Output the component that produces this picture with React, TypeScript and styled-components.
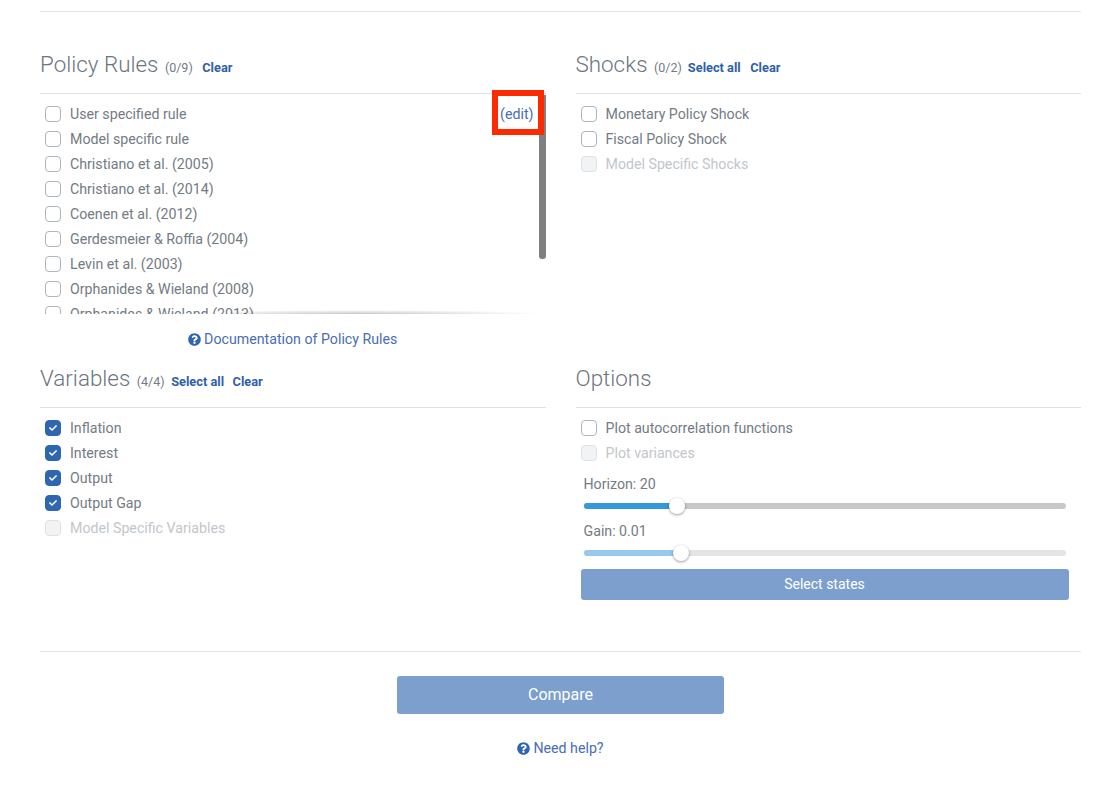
import React, { FunctionComponent } from "react";
import styled, { createGlobalStyle } from "styled-components";
import { FaCheck, FaQuestionCircle } from "react-icons/fa";

const GlobalStyle = createGlobalStyle`
  html, body {
    margin: 0;
    padding: 0;
    background: #fff;
  }
  body {
    font-family: Roboto, "Liberation Sans", sans-serif;
    font-size: 14.2px;
    color: #737b83;
  }
`;

const Page = styled.div`
  width: 1041px;
  padding: 11px 37px 0 40px;
  height: 779px;
  overflow: hidden;
`;

const Rule = styled.hr`
  margin: 0;
  border: 0;
  border-top: 1px solid #e4e4e4;
`;

const Grid = styled.div`
  display: grid;
  grid-template-columns: 505.5px 505.5px;
  column-gap: 30px;
  grid-template-rows: 314px 293px;
  margin-top: 32px;
`;

const Section = styled.section`
  display: flex;
  flex-direction: column;
  min-width: 0;
`;

const SectionHeader = styled.header`
  display: flex;
  align-items: baseline;
  height: 50px;
  box-sizing: border-box;
  padding-top: 6px;
  border-bottom: 1px solid #e0e0e0;
`;

const Title = styled.h2`
  margin: 0;
  font-size: 22.4px;
  line-height: 28px;
  font-weight: 300;
  color: #6c757d;
`;

const Count = styled.span`
  margin-left: 6.5px;
  font-size: 12.5px;
  color: #737b83;
`;

const HeaderLink = styled.a<{ $gap?: number }>`
  margin-left: ${({ $gap }) => $gap ?? 9.5}px;
  font-size: 12.8px;
  font-weight: 700;
  color: #2f5fa8;
  text-decoration: none;
`;

const ScrollBox = styled.div`
  position: relative;
  height: 219px;
  box-sizing: border-box;
  margin-top: 1px;
  padding-top: 6px;
  overflow: hidden;
`;

const List = styled.div<{ $top?: number }>`
  display: flex;
  flex-direction: column;
  padding-top: ${({ $top }) => $top ?? 0}px;
`;

const Row = styled.label<{ $disabled?: boolean }>`
  display: flex;
  align-items: center;
  height: 25px;
  padding-left: 5px;
  font-size: 14.2px;
  color: ${({ $disabled }) => ($disabled ? "#c2c6cb" : "#737b83")};
`;

const Box = styled.span<{ $checked?: boolean; $disabled?: boolean }>`
  display: flex;
  align-items: center;
  justify-content: center;
  flex: none;
  align-self: flex-start;
  width: 16px;
  height: 16px;
  margin: 5px 9px 0 0;
  box-sizing: border-box;
  border-radius: 4px;
  border: 1px solid
    ${({ $checked, $disabled }) =>
      $checked ? "#2f66b0" : $disabled ? "#dfe2e5" : "#adb5bd"};
  background: ${({ $checked, $disabled }) =>
    $checked ? "#2f66b0" : $disabled ? "#f1f3f5" : "#fff"};
  color: #fff;
  font-size: 8px;
`;

const EditLink = styled.a`
  margin-left: auto;
  margin-right: 12px;
  color: #4a6db3;
  text-decoration: none;
`;

const ScrollThumb = styled.div`
  position: absolute;
  top: 0;
  right: 0;
  width: 7px;
  height: 164px;
  background: #808080;
  border-radius: 0 0 3px 3px;
`;

const BottomFade = styled.div`
  position: absolute;
  left: 190px;
  right: 0;
  bottom: 0;
  height: 4px;
  background: radial-gradient(ellipse at 40% 100%, rgba(0, 0, 0, 0.22), rgba(0, 0, 0, 0) 70%);
`;

const Highlight = styled.div`
  position: absolute;
  top: 90px;
  left: 492px;
  width: 52px;
  height: 45px;
  box-sizing: border-box;
  border: 6px solid #fc2a00;
`;

const HelpLink = styled.a`
  display: flex;
  align-items: center;
  justify-content: center;
  gap: 3px;
  color: #4a6db3;
  font-size: 14.2px;
  text-decoration: none;

  svg {
    color: #2f66b0;
    font-size: 13px;
  }
`;

const DocRow = styled.div`
  padding-top: 17px;
`;

const SliderBlock = styled.div<{ $muted?: boolean }>`
  padding: 0 15px 0 8px;
  margin-top: ${({ $muted }) => ($muted ? 14 : 11)}px;
`;

const SliderLabel = styled.div`
  font-size: 14.2px;
  line-height: 17px;
  color: #737b83;
`;

const Track = styled.div<{ $muted?: boolean }>`
  position: relative;
  height: 6px;
  margin-top: 10px;
  border-radius: 3px;
  background: ${({ $muted }) => ($muted ? "#e4e4e4" : "#c8c8c8")};
`;

const Fill = styled.div<{ $muted?: boolean }>`
  height: 100%;
  border-radius: 3px 0 0 3px;
  background: ${({ $muted }) => ($muted ? "#98c9ec" : "#3498db")};
`;

const Thumb = styled.div`
  position: absolute;
  top: -5px;
  width: 16px;
  height: 16px;
  margin-left: -8px;
  border-radius: 50%;
  background: #fff;
  box-shadow: 0 1px 3px rgba(0, 0, 0, 0.4);
`;

const Button = styled.button<{ $large?: boolean }>`
  display: block;
  box-sizing: border-box;
  border: 0;
  border-radius: 3px;
  background: #7c9fcd;
  color: #fff;
  font-family: inherit;
  font-weight: 400;
  padding: 0 0 2px;
  width: ${({ $large }) => ($large ? "327px" : "488px")};
  height: ${({ $large }) => ($large ? "38px" : "31px")};
  font-size: ${({ $large }) => ($large ? "16px" : "14px")};
`;

const SelectStates = styled.div`
  margin-top: 13px;
  padding-left: 5px;
`;

const Footer = styled.footer`
  display: flex;
  flex-direction: column;
  align-items: center;
  padding-top: 24px;
  gap: 26px;
`;

type CheckItem = { label: string; checked?: boolean; disabled?: boolean };

const policyRules: CheckItem[] = [
  { label: "User specified rule" },
  { label: "Model specific rule" },
  { label: "Christiano et al. (2005)" },
  { label: "Christiano et al. (2014)" },
  { label: "Coenen et al. (2012)" },
  { label: "Gerdesmeier & Roffia (2004)" },
  { label: "Levin et al. (2003)" },
  { label: "Orphanides & Wieland (2008)" },
  { label: "Orphanides & Wieland (2013)" },
];

const shocks: CheckItem[] = [
  { label: "Monetary Policy Shock" },
  { label: "Fiscal Policy Shock" },
  { label: "Model Specific Shocks", disabled: true },
];

const variables: CheckItem[] = [
  { label: "Inflation", checked: true },
  { label: "Interest", checked: true },
  { label: "Output", checked: true },
  { label: "Output Gap", checked: true },
  { label: "Model Specific Variables", disabled: true },
];

const options: CheckItem[] = [
  { label: "Plot autocorrelation functions" },
  { label: "Plot variances", disabled: true },
];

const CheckRow: FunctionComponent<{ item: CheckItem; children?: React.ReactNode }> = ({
  item,
  children,
}) => (
  <Row $disabled={item.disabled}>
    <Box $checked={item.checked} $disabled={item.disabled}>
      {item.checked && <FaCheck />}
    </Box>
    {item.label}
    {children}
  </Row>
);

const Slider: FunctionComponent<{ label: string; percent: number; muted?: boolean }> = ({
  label,
  percent,
  muted,
}) => (
  <SliderBlock $muted={muted}>
    <SliderLabel>{label}</SliderLabel>
    <Track $muted={muted}>
      <Fill $muted={muted} style={{ width: `${percent}%` }} />
      <Thumb style={{ left: `${percent}%` }} />
    </Track>
  </SliderBlock>
);

const App: FunctionComponent = () => {
  return (
    <Page>
      <GlobalStyle />
      <Rule />
      <Grid>
        <Section>
          <SectionHeader>
            <Title>Policy Rules</Title>
            <Count>(0/9)</Count>
            <HeaderLink>Clear</HeaderLink>
          </SectionHeader>
          <ScrollBox>
            <List>
              {policyRules.map((item, index) => (
                <CheckRow key={item.label} item={item}>
                  {index === 0 && <EditLink>(edit)</EditLink>}
                </CheckRow>
              ))}
            </List>
            <ScrollThumb />
            <BottomFade />
          </ScrollBox>
          <DocRow>
            <HelpLink>
              <FaQuestionCircle />
              Documentation of Policy Rules
            </HelpLink>
          </DocRow>
        </Section>

        <Section>
          <SectionHeader>
            <Title>Shocks</Title>
            <Count>(0/2)</Count>
            <HeaderLink $gap={6}>Select all</HeaderLink>
            <HeaderLink>Clear</HeaderLink>
          </SectionHeader>
          <List $top={7}>
            {shocks.map((item) => (
              <CheckRow key={item.label} item={item} />
            ))}
          </List>
        </Section>

        <Section>
          <SectionHeader>
            <Title>Variables</Title>
            <Count>(4/4)</Count>
            <HeaderLink $gap={6.5}>Select all</HeaderLink>
            <HeaderLink $gap={8.5}>Clear</HeaderLink>
          </SectionHeader>
          <List $top={7}>
            {variables.map((item) => (
              <CheckRow key={item.label} item={item} />
            ))}
          </List>
        </Section>

        <Section>
          <SectionHeader>
            <Title>Options</Title>
          </SectionHeader>
          <List $top={7}>
            {options.map((item) => (
              <CheckRow key={item.label} item={item} />
            ))}
          </List>
          <Slider label="Horizon: 20" percent={19.3} />
          <Slider label="Gain: 0.01" percent={20.2} muted />
          <SelectStates>
            <Button>Select states</Button>
          </SelectStates>
        </Section>
      </Grid>
      <Rule />
      <Footer>
        <Button $large>Compare</Button>
        <HelpLink>
          <FaQuestionCircle />
          Need help?
        </HelpLink>
      </Footer>
      <Highlight />
    </Page>
  );
};

export default App;
